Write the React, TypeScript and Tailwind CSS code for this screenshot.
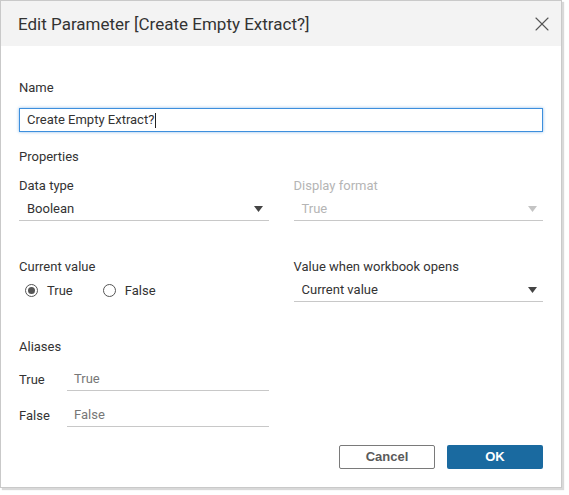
import { X } from "lucide-react";

function Caret({ muted = false }: { muted?: boolean }) {
  return (
    <svg width="9" height="6" viewBox="0 0 9 6" className="shrink-0">
      <path d="M0 0 H9 L4.5 6 Z" fill={muted ? "#c4c4c4" : "#444"} />
    </svg>
  );
}

function Select({ value, muted = false }: { value: string; muted?: boolean }) {
  return (
    <div className="flex h-[23px] items-center justify-between border-b border-[#c8c8c8] pl-2 pr-[6px]">
      <span className={muted ? "text-[#b5b5b5]" : "text-[#333]"}>{value}</span>
      <Caret muted={muted} />
    </div>
  );
}

function Radio({ label, checked = false }: { label: string; checked?: boolean }) {
  return (
    <label className="flex items-center gap-[9px]">
      <span className="flex h-[13px] w-[13px] items-center justify-center rounded-full border border-[#555]">
        {checked && <span className="h-[7px] w-[7px] rounded-full bg-[#555]" />}
      </span>
      <span>{label}</span>
    </label>
  );
}

function AliasRow({ label }: { label: string }) {
  return (
    <div className="flex items-center">
      <span className="w-[48px]">{label}</span>
      <div className="flex h-[23px] w-[202px] items-center border-b border-[#c8c8c8] pl-[7px] text-[#777]">
        {label}
      </div>
    </div>
  );
}

export default function App() {
  return (
    <div className="h-[495px] w-[569px] bg-white font-['Roboto',sans-serif] text-[13px] leading-[16px] text-[#333]">
      <div className="h-[488px] w-[562px] border border-[#c9c9c9] bg-white shadow-[2px_2px_1px_rgba(0,0,0,0.15)]">
        {/* header */}
        <div className="flex h-[45px] items-center justify-between bg-[#f3f3f3] pl-[17px] pr-[7px]">
          <h1 className="text-[17px] leading-[20px] text-[#333]">Edit Parameter [Create Empty Extract?]</h1>
          <X size={24} strokeWidth={1.1} className="text-[#555]" />
        </div>

        <div className="px-[18px]">
          <div className="mt-[34px]">Name</div>
          <div className="mt-[12px] flex h-[24px] items-center border border-[#3d8fdd] pl-[7px] shadow-[0_0_3px_rgba(61,143,221,0.6)]">
            <span>Create Empty Extract?</span>
            <span className="ml-px h-[15px] w-px bg-[#222]" />
          </div>

          <div className="mt-[17px]">Properties</div>

          <div className="mt-[13px] grid grid-cols-2 gap-x-[25px]">
            <div>
              <div>Data type</div>
              <div className="mt-[4px]">
                <Select value="Boolean" />
              </div>
            </div>
            <div>
              <div className="text-[#b5b5b5]">Display format</div>
              <div className="mt-[4px]">
                <Select value="True" muted />
              </div>
            </div>
          </div>

          <div className="mt-[38px] grid grid-cols-2 gap-x-[25px]">
            <div>
              <div>Current value</div>
              <div className="mt-[4px] flex h-[23px] items-center gap-[30px] pl-[6px]">
                <Radio label="True" checked />
                <Radio label="False" />
              </div>
            </div>
            <div>
              <div>Value when workbook opens</div>
              <div className="mt-[4px]">
                <Select value="Current value" />
              </div>
            </div>
          </div>

          <div className="mt-[37px]">Aliases</div>
          <div className="mt-[13px] flex flex-col gap-[13px]">
            <AliasRow label="True" />
            <AliasRow label="False" />
          </div>

          <div className="mt-[18px] flex justify-end gap-[12px] font-['Liberation_Sans',Arial,sans-serif] text-[13px] font-bold">
            <button className="h-[24px] w-[96px] rounded-[2px] border border-[#7a7a7a] bg-white text-[#5a5a5a]">
              Cancel
            </button>
            <button className="h-[24px] w-[96px] rounded-[2px] bg-[#1a6aa0] text-white">OK</button>
          </div>
        </div>
      </div>
    </div>
  );
}
